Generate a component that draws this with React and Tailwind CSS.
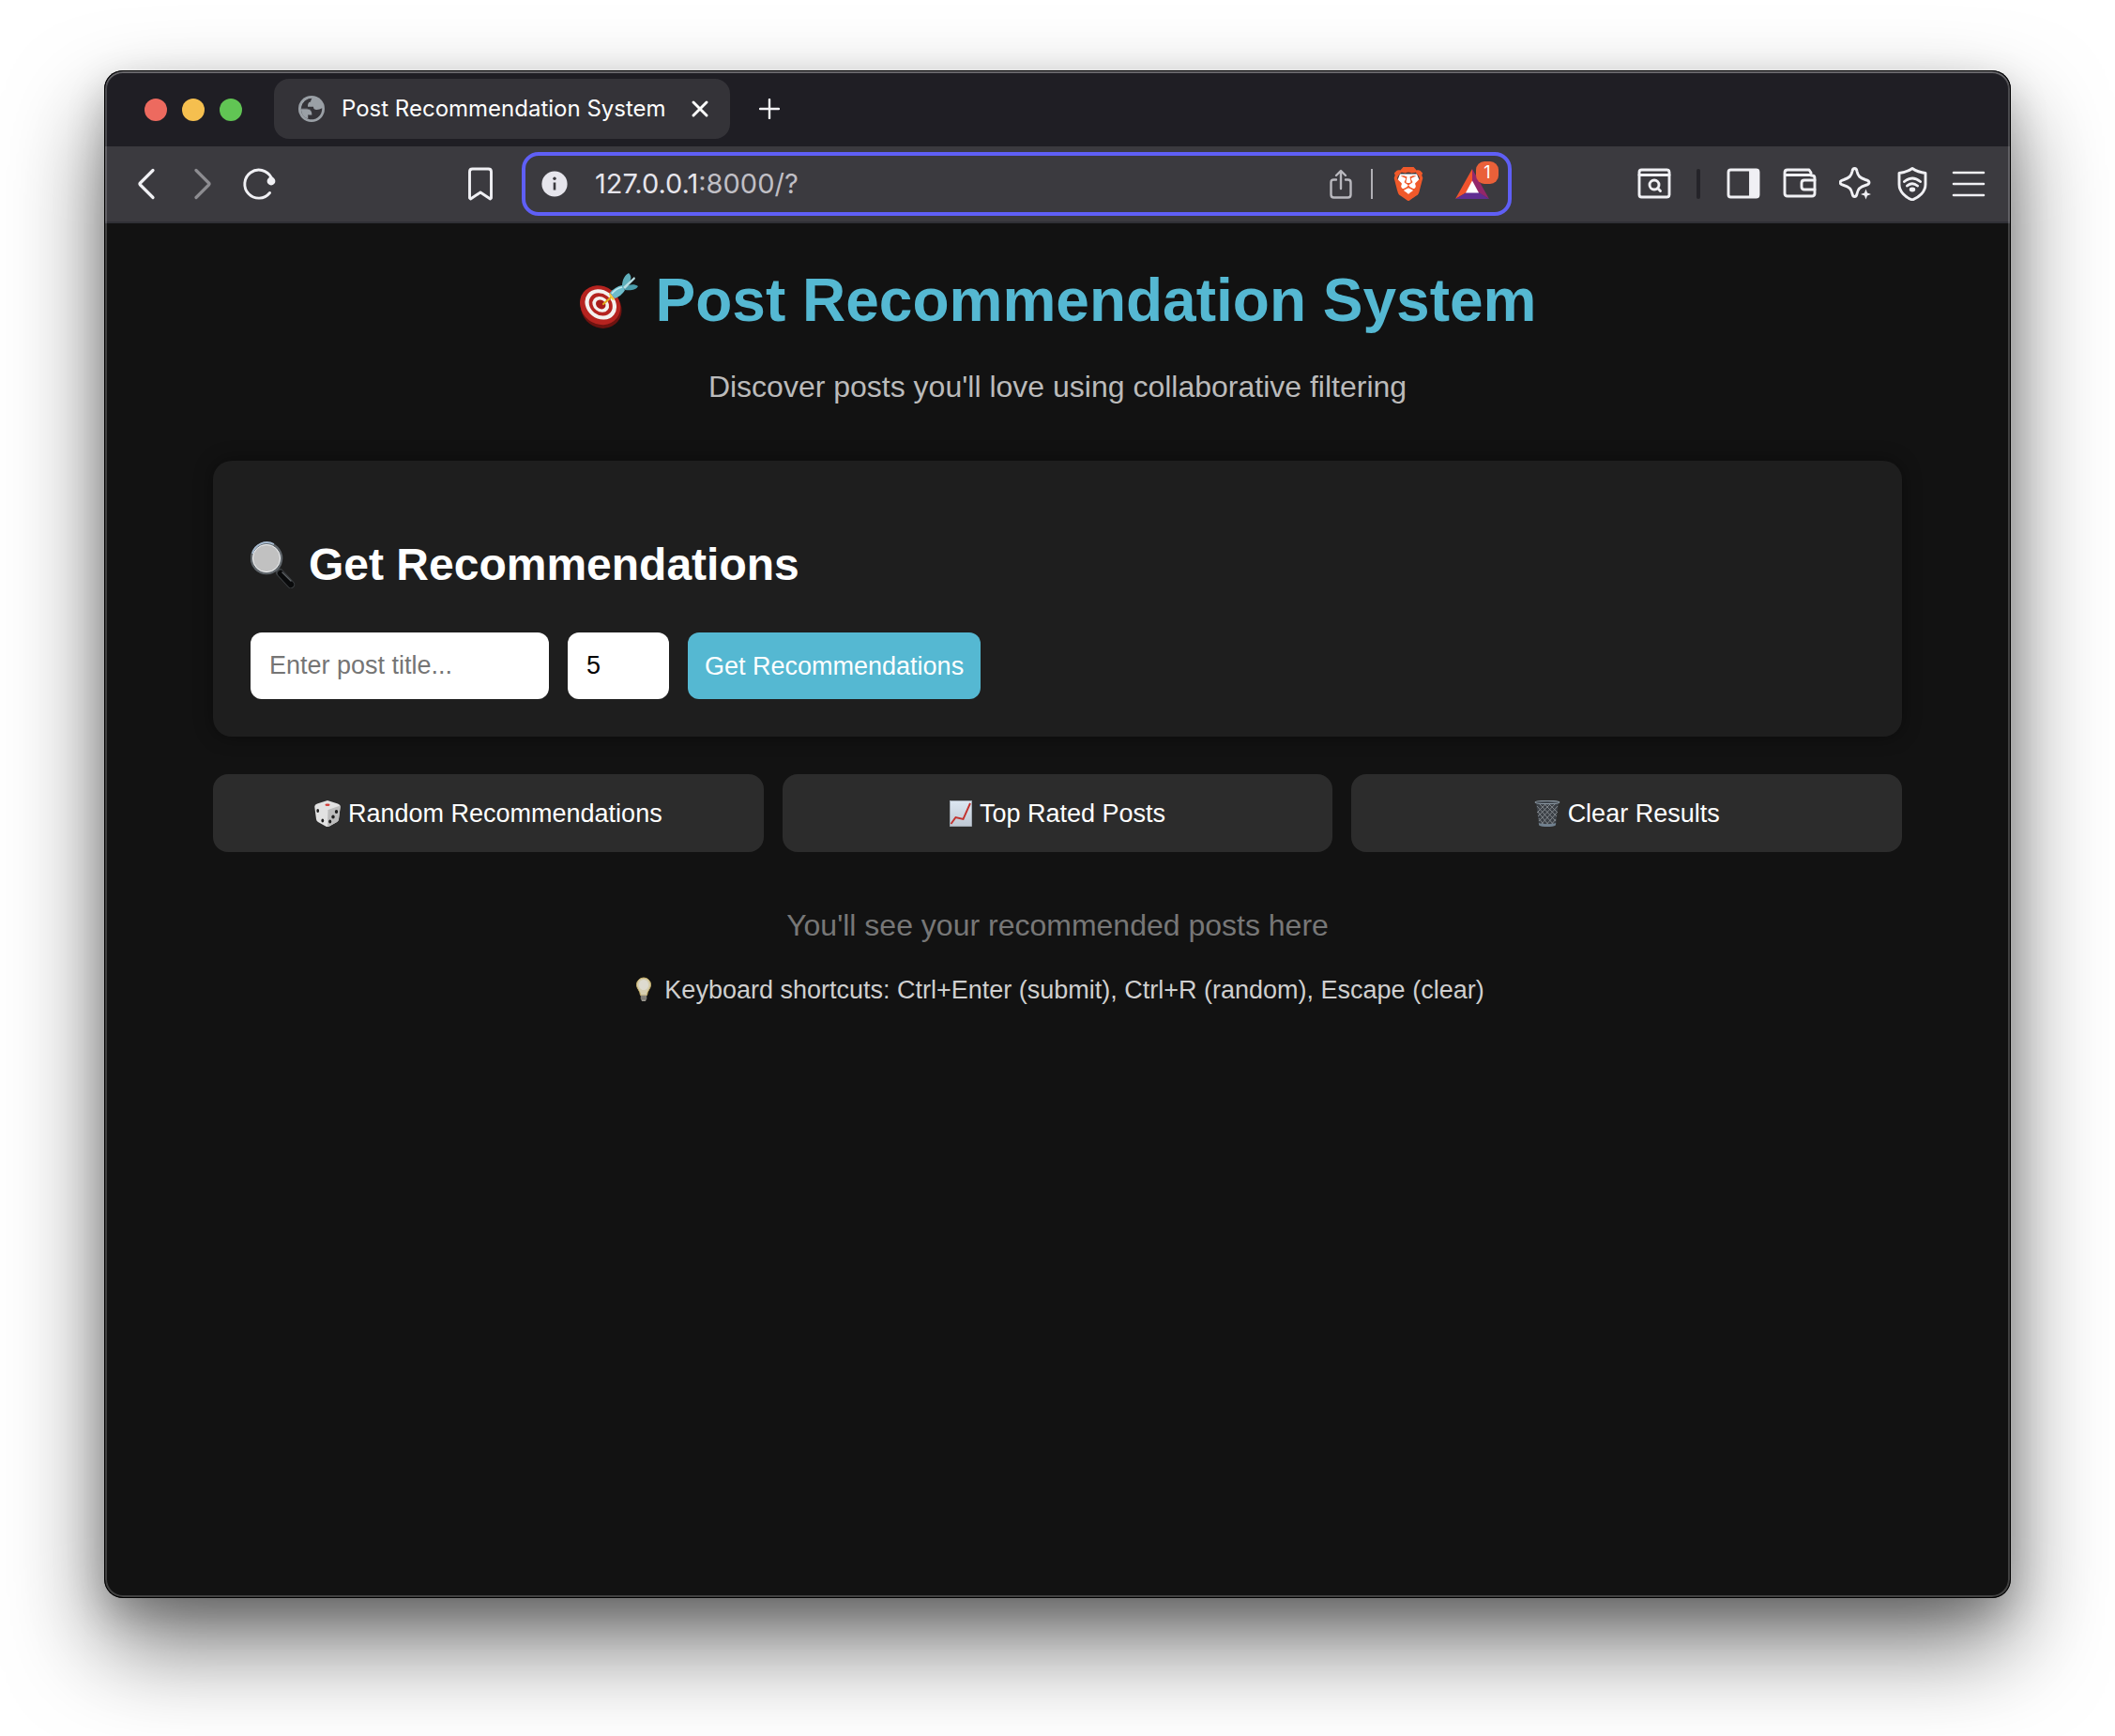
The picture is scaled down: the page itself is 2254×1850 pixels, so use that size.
import React from "react";
import { SiBrave } from "react-icons/si";

const stroke = {
  fill: "none",
  stroke: "currentColor",
  strokeWidth: 2.9,
  strokeLinecap: "round",
  strokeLinejoin: "round",
};

function DartEmoji() {
  return (
    <svg viewBox="0 0 64 64" className="size-16 shrink-0" role="img" aria-label="Dart">
      <g transform="rotate(38 22 38)">
        <ellipse cx="25" cy="39" rx="22.5" ry="20.5" fill="#6d1310" />
        <ellipse cx="22" cy="37" rx="22.5" ry="20" fill="#b5231f" />
        <ellipse cx="22" cy="36" rx="17.8" ry="15" fill="#f4f1ef" />
        <ellipse cx="22" cy="36" rx="13.4" ry="11.2" fill="#b5231f" />
        <ellipse cx="22" cy="36" rx="9.4" ry="7.8" fill="#f4f1ef" />
        <ellipse cx="22" cy="36" rx="5.6" ry="4.6" fill="#a81c1a" />
      </g>
      <path d="M26 36l8-7" stroke="#e0a91c" strokeWidth="2.2" strokeLinecap="round" />
      <path d="M32 26l4 6 2-1-5-7z" fill="#f2c93a" />
      <path d="M33 24c3-4 8-7 13-8l3 5c-2 4-7 8-11 9z" fill="#6cbccb" />
      <path d="M35 25c3-4 7-6 11-7" stroke="#bfeaf0" strokeWidth="1.6" fill="none" />
      <path d="M46 17c0-7 3-12 7-14 2 2 3 4 2 7-1 4-4 7-7 9z" fill="#5fafbc" />
      <path d="M48 19c4-4 11-5 15-2-2 4-8 5-14 4z" fill="#4a9cab" />
      <path d="M47 18l12-11 1 2-11 11z" fill="#b9dfe5" />
    </svg>
  );
}

function MagnifierEmoji() {
  return (
    <svg viewBox="0 0 48 50" className="h-[50px] w-12 shrink-0" role="img" aria-label="Magnifying glass">
      <path d="M31 33l12 13" stroke="#3d4043" strokeWidth="8.4" strokeLinecap="round" />
      <path d="M32 34l11 12" stroke="#090a0b" strokeWidth="6.4" strokeLinecap="round" />
      <path d="M34 33l9 9" stroke="#5d6165" strokeWidth="1.4" strokeLinecap="round" />
      <circle cx="17" cy="18" r="16" fill="#c1c1c1" stroke="#60666b" strokeWidth="2.6" />
      <circle cx="17" cy="18" r="14.6" fill="none" stroke="#f1f3f5" strokeWidth="1" />
      <path d="M2 13a16 16 0 0 1 23-10" fill="none" stroke="#a9bdd2" strokeWidth="1.8" />
    </svg>
  );
}

function DiceEmoji() {
  return (
    <svg viewBox="0 0 28 28" className="size-7 shrink-0" role="img" aria-label="Die">
      <path d="M14 0L25 3.500Q28 4.500 27.700 7L26 20Q25.800 22 24 23L16 27.500Q14 28.500 12 27.500L4 23Q2.200 22 2 20L.3 7Q0 4.500 3 3.500z" fill="#e2e2e2" />
      <path d="M14.500 10L27.600 5.500V7L26 20Q25.800 22 24 23L16 27.500L14 28z" fill="#bcbcbc" />
      <ellipse cx="14" cy="4.800" rx="2.600" ry="1.300" fill="#d33c37" />
      <g fill="#1f1f1f">
        <ellipse cx="3.700" cy="11" rx="1.400" ry="2" />
        <ellipse cx="8.800" cy="21.500" rx="1.400" ry="2" />
        <ellipse cx="23.500" cy="12" rx="1.700" ry="2" />
        <ellipse cx="20" cy="17.500" rx="1.700" ry="2" />
        <ellipse cx="16.700" cy="22.500" rx="1.500" ry="2" />
      </g>
    </svg>
  );
}

function ChartEmoji() {
  return (
    <svg viewBox="0 0 24 28" className="h-7 w-6 shrink-0" role="img" aria-label="Rising chart">
      <defs>
        <linearGradient id="chart-paper" x1="0" y1="0" x2="0" y2="1">
          <stop offset="0" stopColor="#dde7f2" />
          <stop offset="1" stopColor="#bfc8d3" />
        </linearGradient>
      </defs>
      <rect x=".5" y=".5" width="23" height="27" fill="url(#chart-paper)" stroke="#aab2bc" strokeWidth=".8" />
      <path d="M1.500 25l5-7 8 2L22 3" fill="none" stroke="#c2322e" strokeWidth="1.900" />
    </svg>
  );
}

function TrashEmoji() {
  return (
    <svg viewBox="0 0 28 28" className="size-7 shrink-0" role="img" aria-label="Wastebasket">
      <path d="M2 2l3 24c3 2 15 2 18 0l3-24z" fill="#3b4046" />
      <path
        d="M3 6l18 20M5 3l18 19M10 3l14 14M15 3l10 10M4 12l12 15M5 19l6 8M25 6L7 26M23 3L5 22M18 3L4 17M13 3L3 13M24 13L12 27M23 20l-6 7"
        stroke="#878c91"
        strokeWidth=".9"
      />
      <path d="M4.800 24c3 1.500 15.400 1.500 18.400 0l-.4 2.500c-3 2-14.600 2-17.600 0z" fill="#71818f" />
      <ellipse cx="14" cy="2" rx="12.800" ry="1.600" fill="#3d434a" stroke="#8996a1" strokeWidth="1.200" />
    </svg>
  );
}

function BulbEmoji() {
  return (
    <svg viewBox="0 0 28 28" className="size-7 shrink-0" role="img" aria-label="Light bulb">
      <path d="M14 1a7.500 7.500 0 0 1 7.500 7.500c0 4-3.700 6-4 11h-7c-.3-5-4-7-4-11A7.500 7.500 0 0 1 14 1z" fill="#d6ceb0" stroke="#cdb56a" strokeWidth="1" />
      <ellipse cx="14" cy="8.500" rx="5" ry="5.500" fill="#dedbd0" />
      <path d="M10.800 19.500h6.400v4l-1.400 2.500h-3.600l-1.400-2.500z" fill="#98958c" />
      <path d="M11 21.500h6M11 23.500h6" stroke="#5d5b55" strokeWidth=".8" />
    </svg>
  );
}

function GlobeIcon() {
  return (
    <svg viewBox="0 0 28 28" className="size-7" aria-hidden="true">
      <circle cx="14" cy="14" r="14" fill="#9aa0a6" />
      <path
        d="M2.800 14H9.500Q15 14.200 15 18.500Q15 21 13.500 21H10.500V24.900A11.400 11.400 0 0 1 2.800 14z"
        fill="#343338"
      />
      <path
        d="M3.500 12.500Q5 4 14 2.800Q15.500 2.600 16 3.200L13.500 5.200V8.200H11V11.200L11.700 12.700H8.500z"
        fill="#9aa0a6"
      />
      <path
        d="M3.200 12.300A11.300 11.300 0 0 1 14.500 2.700Q13 4.200 13.200 6.300Q9.800 6.500 10 11.800H16Q16 15 19.500 15Q22.500 15 25.200 13.300A11.300 11.300 0 0 1 10.500 24.800V21H14Q15.800 14.300 9.300 13.800H2.800z"
        fill="#343338"
      />
      <path d="M2.900 14.200H9.200Q14.800 14.400 14.300 20.600H10V24.600Q3 21.800 2.900 14.200z" fill="#9aa0a6" />
      <path d="M3.400 12.200Q5 3.800 13.500 2.900L12.900 6Q9.500 6.500 9.800 11.500L6 12.200z" fill="#343338" />
    </svg>
  );
}

function BraveIcon() {
  return (
    <span className="grid size-9 place-items-center">
      <svg viewBox="0 0 24 24" className="col-start-1 row-start-1 size-9" aria-hidden="true">
        <path d="M6 5h12l2 5-2 6-6 5-6-5-2-6z" fill="#fff" />
      </svg>
      <SiBrave className="col-start-1 row-start-1 size-9 text-[#f0592a]" aria-hidden="true" />
    </span>
  );
}

function RewardsIcon() {
  return (
    <svg viewBox="0 0 36 32" className="h-8 w-9" aria-hidden="true">
      <path d="M18 0L0 32l12-7 6-11z" fill="#f0532d" />
      <path d="M18 0l18 32-12-7-6-11z" fill="#93276a" />
      <path d="M0 32h36l-11-7H12z" fill="#5f2d91" />
      <path d="M18 12.500L11 25.500h14z" fill="#fff" />
    </svg>
  );
}

function ToolButton({ label, className = "", children }) {
  return (
    <button
      type="button"
      aria-label={label}
      className={`grid size-10 shrink-0 place-items-center text-[#f0f0f4] ${className}`}
    >
      <svg viewBox="0 0 36 36" className="size-9" aria-hidden="true" {...stroke}>
        {children}
      </svg>
    </button>
  );
}

function TabStrip() {
  return (
    <div className="flex h-[81px] items-start bg-[#1f1e24] pl-[43px]">
      <div className="mt-[30px] flex gap-4">
        <button type="button" aria-label="Close window" className="size-6 rounded-full bg-[#ed6a5f]" />
        <button type="button" aria-label="Minimize window" className="size-6 rounded-full bg-[#f5bf4f]" />
        <button type="button" aria-label="Zoom window" className="size-6 rounded-full bg-[#61c554]" />
      </div>
      <div className="mt-[9px] ml-[34px] flex h-16 items-center rounded-2xl bg-[#343338] pr-4 pl-[26px] text-white">
        <GlobeIcon />
        <span className="ml-[18px] min-w-[344px] font-['Inter'] text-[24px] leading-8 whitespace-nowrap">
          Post Recommendation System
        </span>
        <button type="button" aria-label="Close tab" className="ml-5 grid size-8 place-items-center">
          <svg viewBox="0 0 18 18" className="size-[18px]" aria-hidden="true" {...stroke}>
            <path d="M2 2l14 14M16 2L2 16" />
          </svg>
        </button>
      </div>
      <button type="button" aria-label="New tab" className="mt-[25px] ml-[26px] grid size-8 place-items-center text-[#f4f4f6]">
        <svg viewBox="0 0 22 22" className="size-[22px]" aria-hidden="true" {...stroke} strokeWidth={2.4}>
          <path d="M11 1v20M1 11h20" />
        </svg>
      </button>
    </div>
  );
}

function Toolbar() {
  return (
    <div className="flex h-[82px] items-center border-b-2 border-[#303036] bg-[#3b3a3f] px-[25px]">
      <div className="flex gap-5">
        <ToolButton label="Back">
          <path d="M25 3.500L11.500 17q-1 1 0 2L25 32.500" strokeWidth="3.200" />
        </ToolButton>
        <ToolButton label="Forward" className="opacity-45">
          <path d="M11 3.500L24.500 17q1 1 0 2L11 32.500" strokeWidth="3.200" />
        </ToolButton>
        <ToolButton label="Reload">
          <path d="M29.500 27.500A15 15 0 1 1 31 11" />
          <circle cx="31" cy="15" r="3.400" fill="currentColor" strokeWidth="2" />
        </ToolButton>
      </div>
      <ToolButton label="Bookmark this page" className="ml-[196px]">
        <path d="M6.500 5q0-3 3-3h17q3 0 3 3v28l-1 1-10.500-7-10.500 7-1-1z" />
      </ToolButton>
      <div className="ml-6 flex h-[68px] flex-1 items-center rounded-[18px] border-4 border-[#5f5ff6] pr-2.5 pl-[17px]">
        <button type="button" aria-label="View site information" className="shrink-0">
          <svg viewBox="0 0 28 28" className="size-7" aria-hidden="true">
            <circle cx="14" cy="14" r="13.600" fill="#e6e5ec" />
            <circle cx="14" cy="8.300" r="1.700" fill="#3b3a3f" />
            <path d="M14 12.500v8" stroke="#3b3a3f" strokeWidth="2.600" />
          </svg>
        </button>
        <a href="#url" className="ml-[29px] flex-1 font-['Inter'] text-[29px] leading-10 whitespace-nowrap text-[#c0bfc5]">
          <span className="text-[#e6e5ec]">127.0.0.1</span>:8000/?
        </a>
        <button type="button" aria-label="Share" className="grid size-9 place-items-center text-[#b9b8be]">
          <svg viewBox="0 0 24 32" className="h-8 w-6" aria-hidden="true" {...stroke} strokeWidth={2.4}>
            <path d="M12 21V2.500M7 7l5-5 5 5M7 11.500H4.500q-3 0-3 3v13q0 3 3 3h15q3 0 3-3v-13q0-3-3-3H17" />
          </svg>
        </button>
        <span className="ml-3.5 h-8 w-0.5 bg-[#b0afb5]" />
        <button type="button" aria-label="Brave Shields" className="ml-5">
          <BraveIcon />
        </button>
        <button type="button" aria-label="Brave Rewards" className="relative mr-[10px] ml-8">
          <RewardsIcon />
          <span className="absolute -top-2 -right-2.5 grid size-6 place-items-center rounded-[9px] bg-[#ea6039] font-['Inter'] text-[18px] leading-none text-white">
            1
          </span>
        </button>
      </div>
      <div className="ml-[132px] flex items-center gap-5">
        <ToolButton label="Search tabs">
          <rect x="2" y="3" width="32" height="29" rx="2.500" />
          <path d="M2 8.500h32" />
          <circle cx="18" cy="19" r="5" />
          <path d="M21.500 22.500l3 3" />
        </ToolButton>
        <span className="mr-[6px] ml-[5px] h-8 w-1 rounded-full bg-[#242329]" />
        <ToolButton label="Show sidebar">
          <rect x="2" y="3" width="32" height="29" rx="2.500" />
          <path d="M25.500 3.500H33v28h-7.500z" fill="currentColor" />
        </ToolButton>
        <ToolButton label="Wallet">
          <path d="M2 6q0-3 3-3h23l2 3v3h1q3 0 3 3v16q0 3-3 3H5q-3 0-3-3zM2 8.500h28" />
          <path d="M34 14H23q-3 0-3 3v4q0 3 3 3h11" />
        </ToolButton>
        <ToolButton label="Leo AI">
          <path d="M16.500 1.500q2 0 2.500 3c1 5 3 7 9 9q4 1 4 3t-4 3c-6 1.500-8 4-9 9q-.5 3-2.500 3t-2.500-3c-1-5-3-7.500-9-9q-4-1-4-3t4-3c6-2 8-4 9-9q.5-3 2.500-3z" />
          <path
            d="M28.500 23.500l1.500 4 4 1.500-4 1.500-1.500 4-1.500-4-4-1.500 4-1.500z"
            fill="#f0f0f4"
            stroke="#3b3a3f"
            strokeWidth="3"
            paintOrder="stroke"
          />
        </ToolButton>
        <ToolButton label="VPN">
          <path d="M18 1.500q6 4 14 5v12c0 8-7 14-14 16.500C11 32.500 4 26.500 4 18.500v-12q8-1 14-5z" />
          <path d="M9.500 15.500q8.500-7 17 0M12.500 20q5.500-4.500 11 0" />
          <ellipse cx="18" cy="24" rx="1.800" ry="1" fill="currentColor" />
        </ToolButton>
        <ToolButton label="Menu">
          <path d="M2 6h32M2 18h32M2 30h32" strokeWidth="2.600" />
        </ToolButton>
      </div>
    </div>
  );
}

const actions = [
  { label: "Random Recommendations", Icon: DiceEmoji },
  { label: "Top Rated Posts", Icon: ChartEmoji },
  { label: "Clear Results", Icon: TrashEmoji },
];

function RecommendationPage() {
  return (
    <main className="mx-auto w-full max-w-[1800px] flex-1 pt-[46px] font-['Liberation_Sans',sans-serif] text-white">
      <h1 className="flex items-center justify-center gap-[18px] text-[64px] leading-[72px] font-bold text-[#55b8d2]">
        <DartEmoji />
        Post Recommendation System
      </h1>
      <p className="mt-[38px] text-center text-[32px] leading-9 text-[#bbbbbb]">
        Discover posts you'll love using collaborative filtering
      </p>

      <section className="mt-[61px] rounded-[20px] bg-[#1e1e1e] px-10 pt-[83px] pb-10 shadow-[0_0_20px_rgba(0,0,0,0.4)]">
        <h2 className="flex items-center gap-3.5 text-[48px] leading-[56px] font-bold">
          <MagnifierEmoji />
          Get Recommendations
        </h2>
        <form className="mt-11 flex gap-5 text-[27px] leading-8" onSubmit={(e) => e.preventDefault()}>
          <input
            type="text"
            aria-label="Post title"
            placeholder="Enter post title..."
            className="h-[71px] w-[318px] rounded-xl bg-white px-5 text-black placeholder:text-[#757575]"
          />
          <input
            type="text"
            inputMode="numeric"
            aria-label="Number of recommendations"
            defaultValue="5"
            className="h-[71px] w-[108px] rounded-xl bg-white px-5 text-black"
          />
          <button type="submit" className="h-[71px] rounded-xl bg-[#55b8d2] px-[18px] whitespace-nowrap text-white">
            Get Recommendations
          </button>
        </form>
      </section>

      <div className="mt-10 grid grid-cols-3 gap-5">
        {actions.map(({ label, Icon }) => (
          <button
            key={label}
            type="button"
            className="flex h-[83px] items-center justify-center gap-2 rounded-2xl bg-[#2c2c2c] text-[27px] leading-8 text-white"
          >
            <Icon />
            {label}
          </button>
        ))}
      </div>

      <p className="mt-[60px] text-center text-[32px] leading-9 text-[#777777]">
        You'll see your recommended posts here
      </p>
      <p className="mt-[35px] flex items-center justify-center gap-2 text-[27px] leading-8 text-[#cfcfcf]">
        <BulbEmoji />
        Keyboard shortcuts: Ctrl+Enter (submit), Ctrl+R (random), Escape (clear)
      </p>
    </main>
  );
}

export default function App() {
  return (
    <div className="flex min-h-screen flex-col bg-white px-[111px] pt-[75px] pb-[147px]">
      <div className="relative flex flex-1 flex-col overflow-hidden rounded-[20px] bg-[#121212] shadow-[0_50px_100px_rgba(0,0,0,0.55),0_16px_40px_rgba(0,0,0,0.2)]">
        <TabStrip />
        <Toolbar />
        <RecommendationPage />
        <div className="pointer-events-none absolute inset-0 rounded-[20px] border border-black shadow-[inset_0_0_0_2px_rgba(255,255,255,0.2),inset_0_2px_0_0_rgba(255,255,255,0.15)]" />
      </div>
    </div>
  );
}
